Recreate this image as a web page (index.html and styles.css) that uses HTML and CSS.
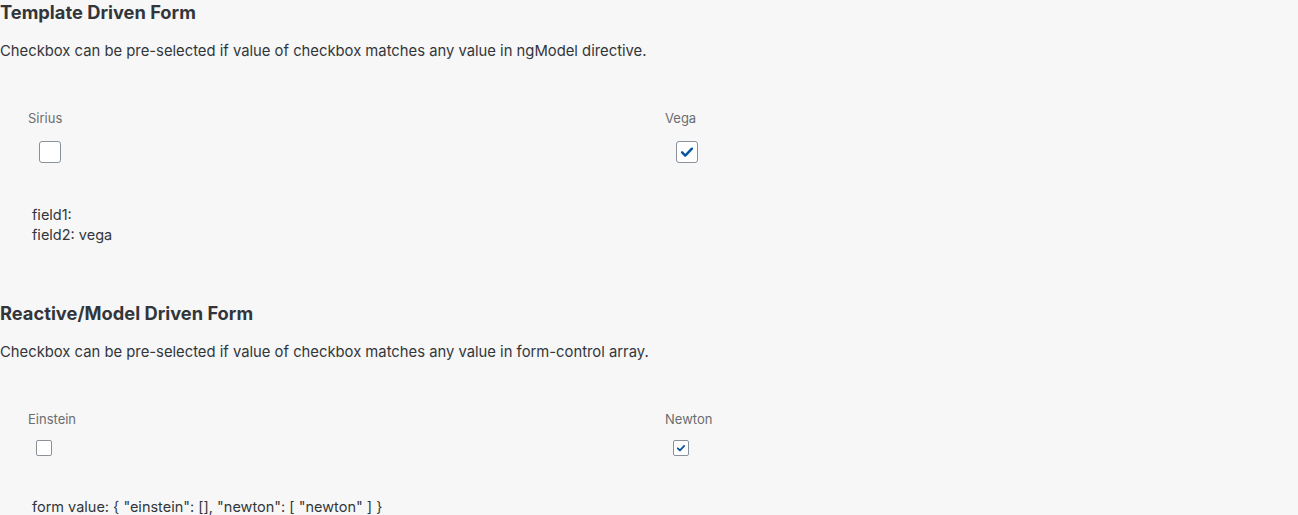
FILE: index.html
```html
<!DOCTYPE html>
<html>
<head>
<meta charset="utf-8">
<link rel="stylesheet" href="styles.css">
</head>
<body>
<section class="section">
  <h3 class="title">Template Driven Form</h3>
  <p class="desc">Checkbox can be pre-selected if value of checkbox matches any value in ngModel directive.</p>
  <div class="group">
    <div class="field">
      <div class="label">Sirius</div>
      <span class="cb cb-lg"></span>
    </div>
    <div class="field">
      <div class="label">Vega</div>
      <span class="cb cb-lg checked">
        <svg viewBox="0 0 22 22" width="22" height="22"><path d="M5.6 11.4 L9.1 14.9 L16.4 7.4" fill="none" stroke="#0854a0" stroke-width="2.7" stroke-linecap="round" stroke-linejoin="round"/></svg>
      </span>
    </div>
  </div>
  <div class="output output-1">
    <div>field1:</div>
    <div>field2: vega</div>
  </div>
</section>
<section class="section section-2">
  <h3 class="title">Reactive/Model Driven Form</h3>
  <p class="desc">Checkbox can be pre-selected if value of checkbox matches any value in form-control array.</p>
  <div class="group">
    <div class="field">
      <div class="label">Einstein</div>
      <span class="cb cb-sm"></span>
    </div>
    <div class="field">
      <div class="label">Newton</div>
      <span class="cb cb-sm checked">
        <svg viewBox="0 0 16 16" width="16" height="16"><path d="M4.3 8.3 L6.8 10.8 L11.7 5.6" fill="none" stroke="#0854a0" stroke-width="2" stroke-linecap="round" stroke-linejoin="round"/></svg>
      </span>
    </div>
  </div>
  <div class="output output-2">
    <div>form value: { "einstein": [], "newton": [ "newton" ] }</div>
  </div>
</section>
</body>
</html>
```
FILE: styles.css
```css
html, body {
  margin: 0;
  padding: 0;
  background: #f7f7f7;
  color: #32363a;
  font-family: Inter, "Liberation Sans", sans-serif;
}
.section {
  display: flex;
  flex-direction: column;
}
.title {
  margin: 0;
  font-size: 18.3px;
  font-weight: 700;
  line-height: 24px;
  color: #32363a;
}
.desc {
  margin: 17px 0 0 0;
  font-size: 14.8px;
  line-height: 20px;
}
.group {
  display: grid;
  grid-template-columns: 637px 1fr;
  margin-top: 49px;
}
.field {
  display: flex;
  flex-direction: column;
  align-items: flex-start;
  padding-left: 28px;
}
.label {
  font-size: 13px;
  line-height: 16px;
  color: #6a6d70;
}
.cb {
  box-sizing: border-box;
  display: flex;
  align-items: center;
  justify-content: center;
  background: #fff;
  border: 1px solid #89919a;
}
.cb svg { display: block; }
.cb-lg {
  width: 22px;
  height: 22px;
  border-radius: 3px;
  margin: 15px 0 0 11px;
}
.cb-sm {
  width: 16px;
  height: 16px;
  border-radius: 2px;
  margin: 13px 0 0 8px;
}
.output {
  padding-left: 32px;
  font-size: 14.5px;
  line-height: 20px;
}
.output-1 {
  margin-top: 42px;
}
.section-2 {
  margin-top: 56px;
}
.output-2 {
  margin-top: 41px;
}
```
